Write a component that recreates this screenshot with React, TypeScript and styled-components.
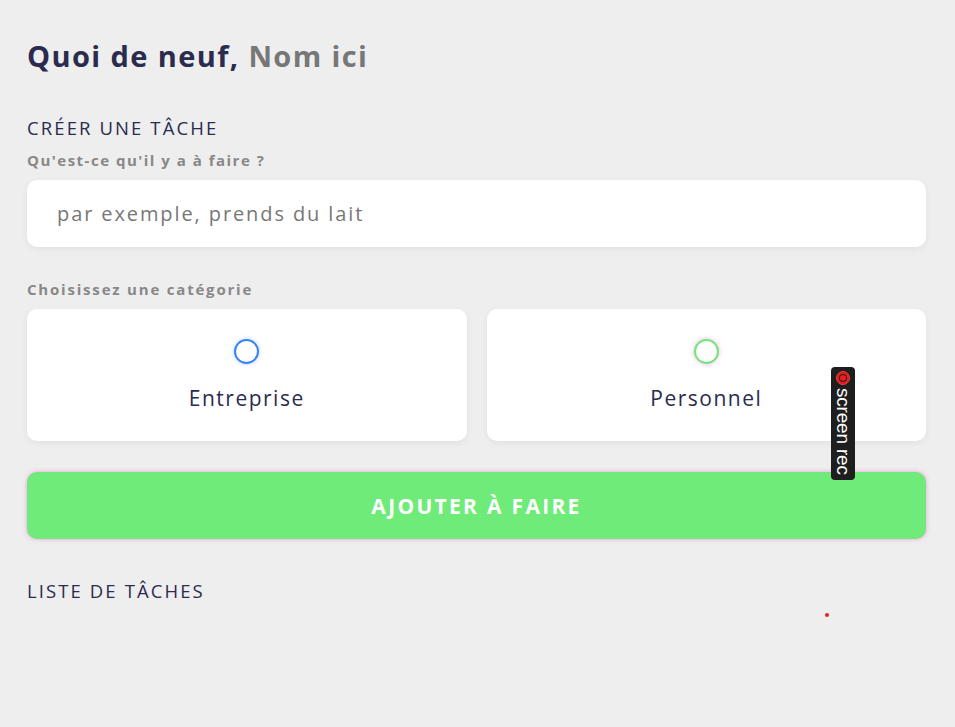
import React from "react";
import styled, { createGlobalStyle } from "styled-components";

const Global = createGlobalStyle`
  html, body { margin: 0; padding: 0; background: #eeeeee; }
  body { font-family: "Open Sans", "Liberation Sans", sans-serif; }
  * { box-sizing: border-box; }
`;

const Page = styled.main`
  position: relative;
  min-height: 727px;
  padding: 36px 29px 0 27px;
  display: flex;
  flex-direction: column;
  color: #2b2b4e;
`;

const Title = styled.h1`
  margin: 0;
  font-size: 29px;
  font-weight: 700;
  line-height: 40px;
  letter-spacing: 1.4px;
  color: #2b2b4e;
`;

const Name = styled.span`
  color: #777777;
`;

const Section = styled.h2`
  margin: 40px 0 0;
  font-size: 18.5px;
  font-weight: 400;
  line-height: 24px;
  letter-spacing: 2.1px;
  color: #2b2b4e;
`;

const Label = styled.div`
  margin-top: 10px;
  font-size: 15px;
  font-weight: 700;
  line-height: 20px;
  letter-spacing: 1.5px;
  color: #888888;
`;

const Input = styled.input`
  margin-top: 10px;
  height: 67px;
  width: 100%;
  border: none;
  outline: none;
  border-radius: 10px;
  background: #ffffff;
  box-shadow: 0 2px 6px rgba(0, 0, 0, 0.06);
  padding: 0 30px;
  font-family: inherit;
  font-size: 20px;
  letter-spacing: 1.9px;
  color: #2b2b4e;
  &::placeholder { color: #777777; }
`;

const CatLabel = styled(Label)`
  margin-top: 32px;
  letter-spacing: 1.8px;
`;

const Cards = styled.div`
  margin-top: 10px;
  display: grid;
  grid-template-columns: 1fr 1fr;
  gap: 20px;
`;

const Card = styled.label`
  height: 132px;
  border-radius: 10px;
  background: #ffffff;
  box-shadow: 0 2px 6px rgba(0, 0, 0, 0.06);
  display: flex;
  flex-direction: column;
  align-items: center;
  padding-top: 30px;
  cursor: pointer;
`;

const Radio = styled.span<{ $color: string; $glow: string }>`
  width: 25px;
  height: 25px;
  border-radius: 50%;
  border: 2px solid ${(p) => p.$color};
  box-shadow: 0 0 4px ${(p) => p.$glow};
  background: #ffffff;
`;

const CardText = styled.span`
  margin-top: 20px;
  font-size: 21px;
  line-height: 28px;
  letter-spacing: 1.5px;
  color: #2b2b4e;
`;

const Button = styled.button`
  margin-top: 31px;
  height: 67px;
  width: 100%;
  border: none;
  border-radius: 10px;
  background: #6eeb78;
  box-shadow: 0 0 4px rgba(240, 120, 210, 0.7);
  color: #ffffff;
  font-family: inherit;
  font-size: 21px;
  font-weight: 700;
  letter-spacing: 2.3px;
  cursor: pointer;
`;

const ListTitle = styled(Section)`
  margin-top: 40px;
`;

const RecBadge = styled.div`
  position: absolute;
  left: 831px;
  top: 367px;
  width: 24px;
  height: 113px;
  border-radius: 4px;
  background: #1e1e1e;
  display: flex;
  flex-direction: column;
  align-items: center;
  padding-top: 4px;
`;

const RecDot = styled.span`
  width: 14px;
  height: 14px;
  border-radius: 50%;
  background: #f01c1c;
  box-shadow: inset 0 0 0 2px #f01c1c, inset 0 0 0 3px #1e1e1e;
  border: 1px solid #f04040;
`;

const RecText = styled.span`
  margin-top: 3px;
  writing-mode: vertical-rl;
  color: #ffffff;
  font-family: "Liberation Sans", "Open Sans", sans-serif;
  font-size: 19px;
  line-height: 22px;
  letter-spacing: -0.2px;
`;

const Dot = styled.span`
  position: absolute;
  left: 825px;
  top: 613px;
  width: 4px;
  height: 4px;
  border-radius: 50%;
  background: #e8201e;
`;

export default function App() {
  return (
    <>
      <Global />
      <Page>
        <Title>
          Quoi de neuf, <Name>Nom ici</Name>
        </Title>
        <Section>CRÉER UNE TÂCHE</Section>
        <Label>Qu'est-ce qu'il y a à faire ?</Label>
        <Input placeholder="par exemple, prends du lait" />
        <CatLabel>Choisissez une catégorie</CatLabel>
        <Cards>
          <Card>
            <Radio $color="#3a82f7" $glow="rgba(58,130,247,0.35)" />
            <CardText>Entreprise</CardText>
          </Card>
          <Card>
            <Radio $color="#6fe87a" $glow="rgba(240,120,210,0.6)" />
            <CardText>Personnel</CardText>
          </Card>
        </Cards>
        <Button>AJOUTER À FAIRE</Button>
        <ListTitle>LISTE DE TÂCHES</ListTitle>
        <RecBadge>
          <RecDot />
          <RecText>screen rec</RecText>
        </RecBadge>
        <Dot />
      </Page>
    </>
  );
}
